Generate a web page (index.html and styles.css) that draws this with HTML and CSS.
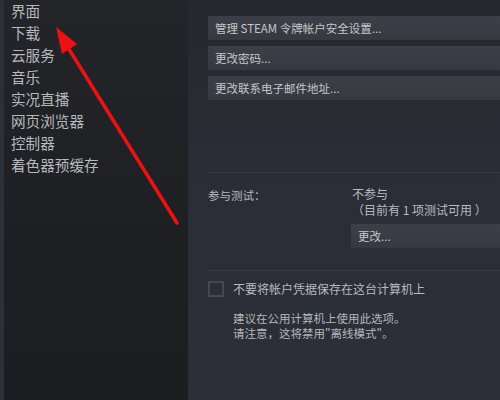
FILE: index.html
```html
<!DOCTYPE html>
<html lang="zh">
<head>
<meta charset="utf-8">
<link rel="stylesheet" href="styles.css">
</head>
<body>
<div class="app">
  <div class="edge"></div>
  <nav class="sidebar">
    <div class="item">界面</div>
    <div class="item">下载</div>
    <div class="item">云服务</div>
    <div class="item">音乐</div>
    <div class="item">实况直播</div>
    <div class="item">网页浏览器</div>
    <div class="item">控制器</div>
    <div class="item">着色器预缓存</div>
  </nav>
  <main class="content">
    <div class="buttons">
      <div class="btn">管理 STEAM 令牌帐户安全设置...</div>
      <div class="btn">更改密码...</div>
      <div class="btn">更改联系电子邮件地址...</div>
    </div>
    <div class="sep sep-first"></div>
    <div class="beta">
      <div class="beta-label">参与测试：</div>
      <div class="beta-value">
        <div class="line">不参与</div>
        <div class="line">（目前有 1 项测试可用 ）</div>
        <div class="btn btn-change">更改...</div>
      </div>
    </div>
    <div class="sep sep-second"></div>
    <div class="check">
      <span class="box"></span>
      <span class="check-text">不要将帐户凭据保存在这台计算机上</span>
    </div>
    <div class="note">
      <div class="note-line">建议在公用计算机上使用此选项。</div>
      <div class="note-line">请注意，这将禁用"离线模式"。</div>
    </div>
  </main>
  <svg class="arrow" width="500" height="400" viewBox="0 0 500 400">
    <line x1="177" y1="223" x2="67" y2="46" stroke="#ee1111" stroke-width="3.5" stroke-linecap="round"/>
    <polygon points="56,27 77,44 62,54" fill="#ee1111"/>
  </svg>
</div>
</body>
</html>
```

FILE: styles.css
```css
* { box-sizing: border-box; }
html, body {
  margin: 0;
  padding: 0;
  width: 500px;
  height: 400px;
  overflow: hidden;
  background: #2a2d34;
}
.app {
  position: relative;
  display: flex;
  width: 500px;
  height: 400px;
  font-family: "Noto Sans CJK SC", "Liberation Sans", sans-serif;
}
.edge {
  width: 4px;
  flex: none;
  background: #2c3037;
}
.sidebar {
  width: 184px;
  flex: none;
  background: linear-gradient(180deg, #232529 0%, #1e1f23 60%, #1c1d20 100%);
  padding: 0 0 0 7px;
}
.item {
  font-size: 14.6px;
  line-height: 22px;
  color: #b6b9bd;
  white-space: nowrap;
}
.content {
  flex: 1;
  overflow: hidden;
  padding: 16px 0 0 20px;
  background: linear-gradient(180deg, #25282e 0%, #2a2d35 40%, #2c2f37 100%);
  font-size: 11.5px;
  color: #b4b7bb;
}
.buttons {
  display: flex;
  flex-direction: column;
  gap: 6px;
}
.btn {
  height: 24px;
  line-height: 24px;
  padding-left: 7px;
  margin-right: -10px;
  background: linear-gradient(180deg, #3c3f47 0%, #36393f 100%);
  color: #c4c7cb;
  white-space: nowrap;
}
.sep {
  height: 1px;
  background: #383b42;
  margin-right: -10px;
}
.sep-first { margin-top: 72px; }
.beta {
  display: flex;
  margin-top: 13px;
}
.beta-label {
  width: 144px;
  flex: none;
  line-height: 16px;
  margin-top: 1px;
}
.beta-value {
  flex: 1;
}
.line {
  line-height: 16px;
  font-size: 12px;
  color: #b8bbbf;
  white-space: nowrap;
}
.btn-change {
  margin-top: 6px;
  padding-left: 7px;
  margin-left: -1px;
}
.sep-second { margin-top: 22px; }
.check {
  display: flex;
  align-items: center;
  gap: 9px;
  margin-top: 10px;
  height: 16px;
}
.box {
  width: 16px;
  height: 16px;
  border: 2px solid #45484e;
  flex: none;
}
.check-text {
  color: #b8bbbf;
  line-height: 16px;
  font-size: 12px;
}
.note {
  margin-top: 14px;
  margin-left: 25px;
  color: #b4b7bb;
}
.note-line {
  height: 15px;
  line-height: 15px;
}
.arrow {
  position: absolute;
  left: 0;
  top: 0;
  pointer-events: none;
}
```
